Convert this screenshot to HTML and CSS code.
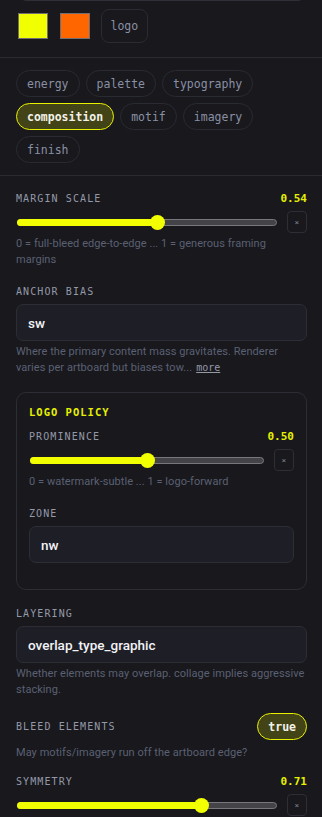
FILE: index.html
```html
<!DOCTYPE html>
<html>
<head>
<meta charset="utf-8">
<link rel="stylesheet" href="styles.css">
</head>
<body>
<div class="panel">
  <div class="top-stub"></div>
  <div class="swatches">
    <span class="swatch sw-yellow"></span>
    <span class="swatch sw-orange"></span>
    <span class="logo-btn">logo</span>
  </div>
  <div class="divider"></div>
  <div class="tags">
    <span class="tag">energy</span>
    <span class="tag">palette</span>
    <span class="tag">typography</span>
    <span class="tag active">composition</span>
    <span class="tag">motif</span>
    <span class="tag">imagery</span>
    <span class="tag">finish</span>
  </div>
  <div class="divider"></div>
  <div class="fields">
    <div class="field">
      <div class="label-row"><span class="label">Margin scale</span><span class="value">0.54</span></div>
      <div class="slider-row">
        <div class="track"><div class="fill" style="width:54%"></div><div class="thumb" style="left:54%"></div></div>
        <span class="reset">×</span>
      </div>
      <p class="hint">0 = full-bleed edge-to-edge ... 1 = generous framing margins</p>
    </div>
    <div class="field">
      <div class="label-row"><span class="label">Anchor bias</span></div>
      <div class="input">sw</div>
      <p class="hint"><span>Where the primary content mass gravitates. Renderer varies per artboard but biases tow...</span><span class="more">more</span></p>
    </div>
    <div class="group">
      <div class="group-title">Logo policy</div>
      <div class="field">
        <div class="label-row"><span class="label">Prominence</span><span class="value">0.50</span></div>
        <div class="slider-row">
          <div class="track"><div class="fill" style="width:50%"></div><div class="thumb" style="left:50%"></div></div>
          <span class="reset">×</span>
        </div>
        <p class="hint">0 = watermark-subtle ... 1 = logo-forward</p>
      </div>
      <div class="field zone">
        <div class="label-row"><span class="label">Zone</span></div>
        <div class="input">nw</div>
      </div>
    </div>
    <div class="field">
      <div class="label-row"><span class="label">Layering</span></div>
      <div class="input">overlap_type_graphic</div>
      <p class="hint">Whether elements may overlap. collage implies aggressive stacking.</p>
    </div>
    <div class="field bleed">
      <div class="label-row"><span class="label">Bleed elements</span><span class="toggle">true</span></div>
      <p class="hint">May motifs/imagery run off the artboard edge?</p>
    </div>
    <div class="field">
      <div class="label-row"><span class="label">Symmetry</span><span class="value">0.71</span></div>
      <div class="slider-row">
        <div class="track"><div class="fill" style="width:71%"></div><div class="thumb" style="left:71%"></div></div>
        <span class="reset">×</span>
      </div>
    </div>
  </div>
</div>
</body>
</html>
```
FILE: styles.css
```css
* { box-sizing: border-box; }
html, body { margin: 0; padding: 0; }
body {
  background: #18181d;
  font-family: "Roboto", "Noto Sans", sans-serif;
  color: #e8e8ee;
  width: 322px;
  height: 817px;
  overflow: hidden;
}
.panel { display: flex; flex-direction: column; }
.top-stub {
  margin: -20px 18px 0 20px;
  height: 21px;
  border: 1px solid #2e2f37;
  border-radius: 6px;
}
.swatches {
  display: flex;
  align-items: center;
  gap: 12px;
  padding: 8px 16px 14px 18px;
}
.swatch {
  width: 30px;
  height: 26px;
  border: 1px solid #6e6e74;
}
.sw-yellow { background: #f2ff00; }
.sw-orange { background: #ff6600; margin-right: -1px; }
.logo-btn {
  height: 34px;
  padding: 0 8.5px;
  display: flex;
  align-items: center;
  border: 1px solid #2b2c33;
  border-radius: 8px;
  font-family: "DejaVu Sans Mono", monospace;
  font-size: 11.5px;
  color: #8a90a4;
}
.divider { height: 1px; background: #2a2b31; }
.tags {
  display: flex;
  flex-wrap: wrap;
  gap: 6px;
  padding: 12px 16px 12px 16px;
}
.tag {
  height: 27px;
  padding: 0 10px;
  display: flex;
  align-items: center;
  border: 1px solid #2a2b32;
  border-radius: 14px;
  font-family: "DejaVu Sans Mono", monospace;
  font-size: 11.5px;
  color: #8a90a4;
}
.tag.active {
  background: #434318;
  border-color: #e8f200;
  color: #f2f2e8;
  font-weight: bold;
}
.fields {
  display: flex;
  flex-direction: column;
  gap: 16px;
  padding: 15px 15px 0 16px;
}
.field { display: flex; flex-direction: column; }
.label-row {
  display: flex;
  justify-content: space-between;
  align-items: center;
  height: 14px;
}
.label {
  font-family: "DejaVu Sans Mono", monospace;
  font-size: 10px;
  letter-spacing: 1.1px;
  text-transform: uppercase;
  color: #9499a8;
}
.value {
  font-family: "DejaVu Sans Mono", monospace;
  font-size: 11px;
  font-weight: bold;
  color: #e6f000;
}
.slider-row {
  display: flex;
  align-items: center;
  gap: 10px;
  margin-top: 6px;
  height: 22px;
}
.track {
  position: relative;
  flex: 1;
  height: 7px;
  margin-left: 1px;
  background: #444448;
  border: 1px solid #77777c;
  border-radius: 4px;
}
.fill {
  background: #f2ff00;
  border-radius: 4px 0 0 4px;
  margin: -1px 0 0 -1px;
  height: 7px;
}
.thumb {
  position: absolute;
  top: 50%;
  width: 15px;
  height: 15px;
  margin: -7.5px 0 0 -7.5px;
  border-radius: 50%;
  background: #f2ff00;
}
.reset {
  width: 20px;
  height: 22px;
  display: flex;
  align-items: center;
  justify-content: center;
  border: 1px solid #2d2e36;
  border-radius: 4px;
  font-size: 8px;
  color: #7a7f8e;
}
.hint {
  margin: 3px 0 0;
  font-size: 11px;
  letter-spacing: 0.05px;
  line-height: 16px;
  color: #5b6073;
}
.more {
  display: inline-block;
  margin-left: 4px;
  font-family: "DejaVu Sans Mono", monospace;
  font-size: 10px;
  letter-spacing: 0;
  color: #9499a8;
  text-decoration: underline;
}
.input {
  margin-top: 6px;
  height: 37px;
  display: flex;
  align-items: center;
  padding: 0 11px;
  background: #1e1f26;
  border: 1px solid #2c2d35;
  border-radius: 7px;
  font-size: 13.5px;
  font-weight: 500;
  color: #f2f2f6;
}
.group {
  display: flex;
  flex-direction: column;
  gap: 10px;
  padding: 12px 12px 26px;
  border: 1px solid #2c2d35;
  border-radius: 10px;
}
.group-title {
  font-family: "DejaVu Sans Mono", monospace;
  font-size: 10.5px;
  font-weight: bold;
  letter-spacing: 1px;
  text-transform: uppercase;
  color: #e6f000;
  line-height: 14px;
}
.group .field.zone { margin-top: 6px; }
.bleed { margin: -1px 0 -3px; }
.bleed .label-row { height: 27px; }
.bleed .hint { margin-top: 5px; }
.toggle {
  height: 27px;
  padding: 0 10px;
  display: flex;
  align-items: center;
  background: #434318;
  border: 1px solid #e8f200;
  border-radius: 14px;
  font-family: "DejaVu Sans Mono", monospace;
  font-size: 11.5px;
  font-weight: bold;
  color: #f2f2e8;
}
```
